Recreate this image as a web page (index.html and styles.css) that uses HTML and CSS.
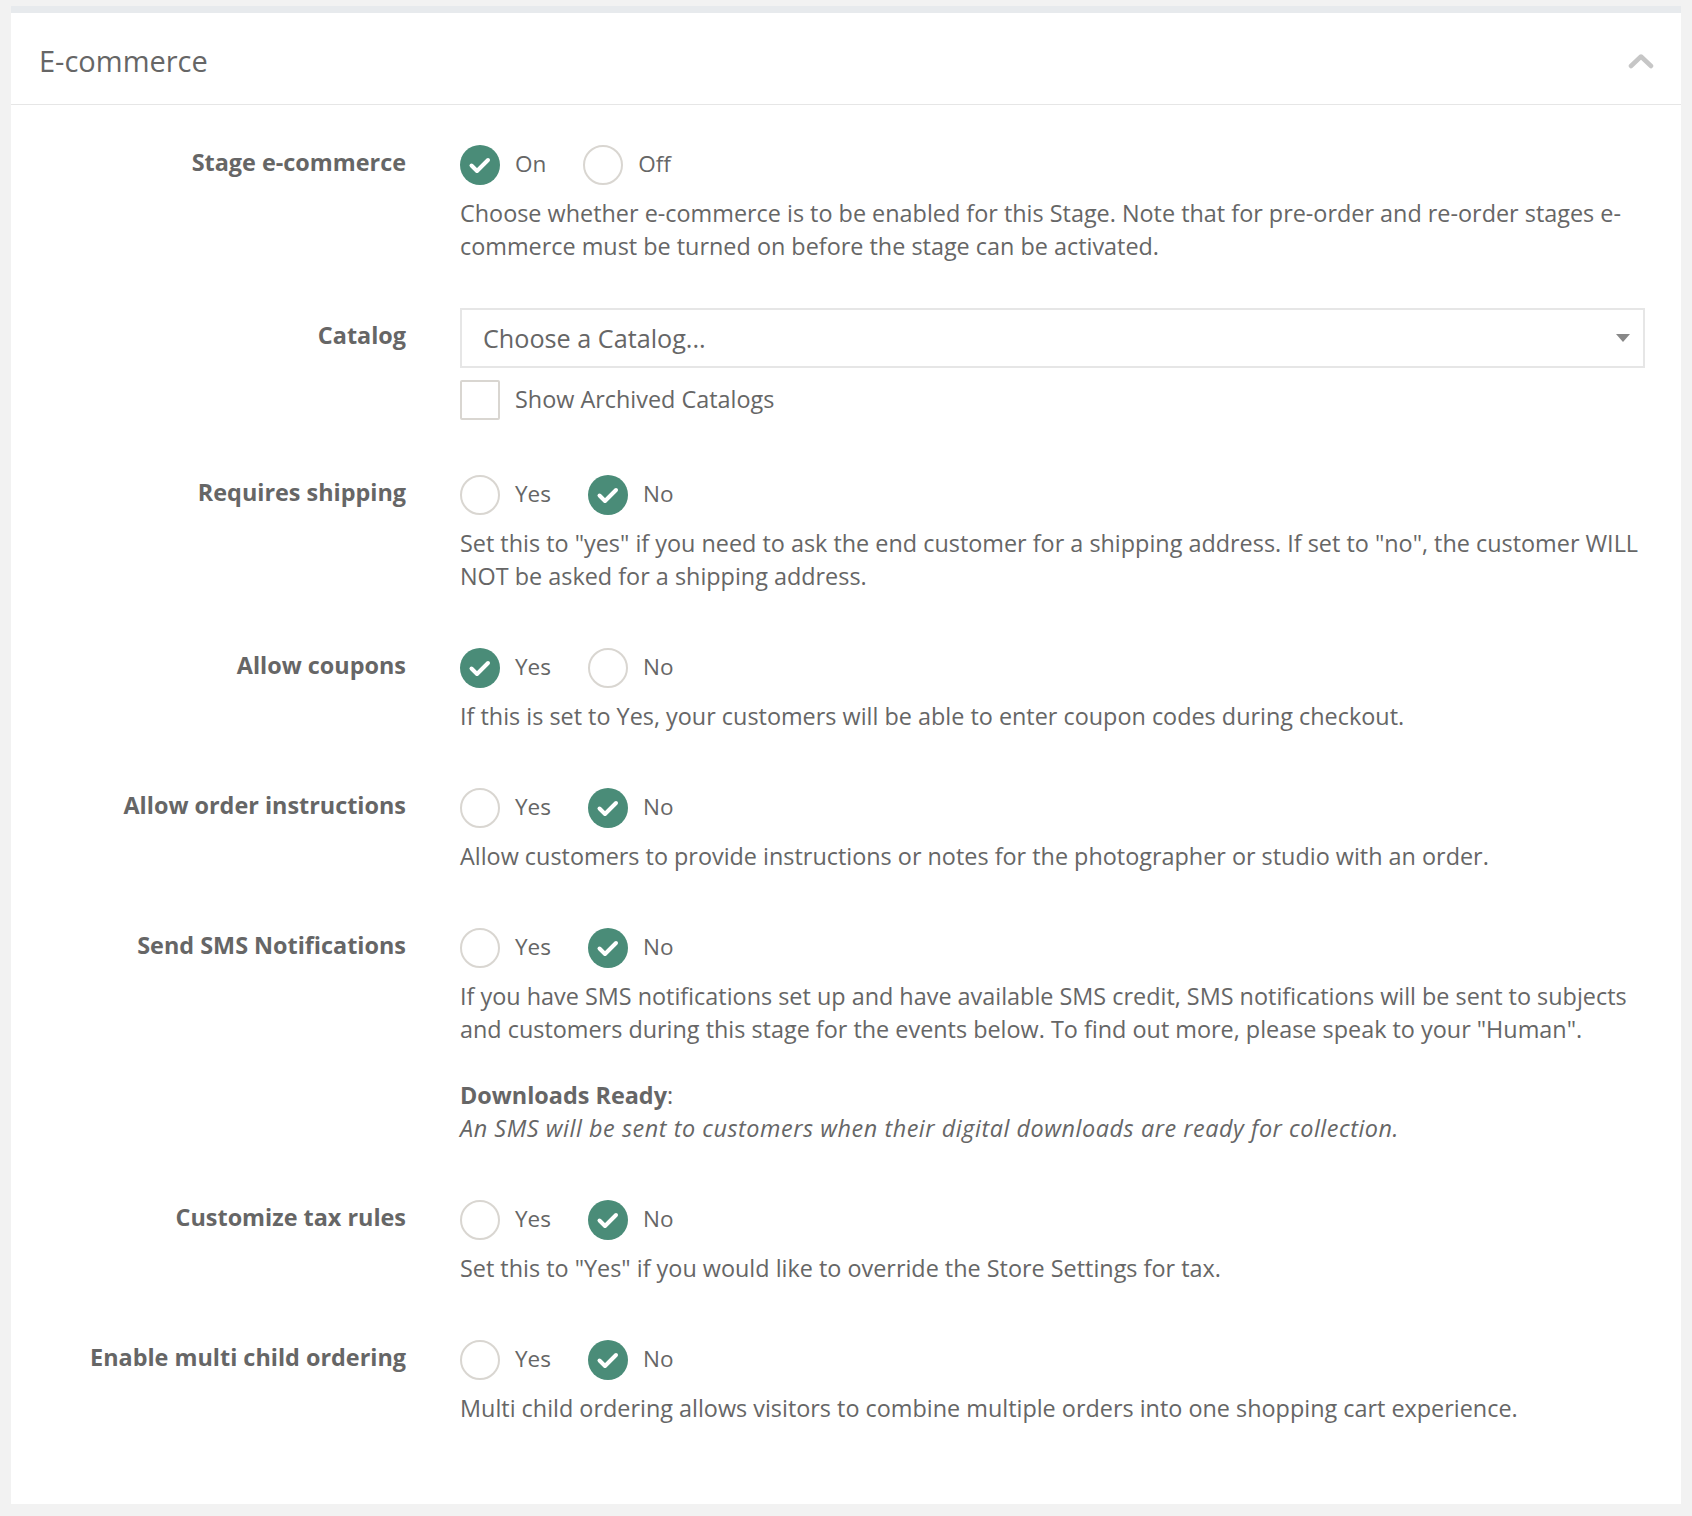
FILE: index.html
```html
<!DOCTYPE html>
<html lang="en">
<head>
    <meta charset="UTF-8">
    <title>E-commerce</title>
    <link rel="stylesheet" href="styles.css">
</head>
<body>
    <div class="panel">
        <div class="panel-heading">
            <h2>E-commerce</h2>
            <svg class="chevron" width="26" height="16" viewBox="0 0 26 16"><path d="M3 13 L13 3.5 L23 13" fill="none" stroke="#c6c6c6" stroke-width="4.5" stroke-linecap="round" stroke-linejoin="round"/></svg>
        </div>
        <div class="panel-body">

            <div class="form-row">
                <label class="row-label">Stage e-commerce</label>
                <div class="row-field">
                    <div class="radio-group">
                        <span class="option"><span class="radio checked"></span><span class="opt-text">On</span></span>
                        <span class="option"><span class="radio"></span><span class="opt-text">Off</span></span>
                    </div>
                    <p class="help">Choose whether e-commerce is to be enabled for this Stage. Note that for pre-order and re-order stages e-commerce must be turned on before the stage can be activated.</p>
                </div>
            </div>

            <div class="form-row">
                <label class="row-label">Catalog</label>
                <div class="row-field">
                    <div class="select">
                        <span>Choose a Catalog...</span>
                        <span class="caret"></span>
                    </div>
                    <div class="check-line">
                        <span class="checkbox"></span><span class="opt-text">Show Archived Catalogs</span>
                    </div>
                </div>
            </div>

            <div class="form-row">
                <label class="row-label">Requires shipping</label>
                <div class="row-field">
                    <div class="radio-group">
                        <span class="option"><span class="radio"></span><span class="opt-text">Yes</span></span>
                        <span class="option"><span class="radio checked"></span><span class="opt-text">No</span></span>
                    </div>
                    <p class="help">Set this to "yes" if you need to ask the end customer for a shipping address. If set to "no", the customer WILL NOT be asked for a shipping address.</p>
                </div>
            </div>

            <div class="form-row">
                <label class="row-label">Allow coupons</label>
                <div class="row-field">
                    <div class="radio-group">
                        <span class="option"><span class="radio checked"></span><span class="opt-text">Yes</span></span>
                        <span class="option"><span class="radio"></span><span class="opt-text">No</span></span>
                    </div>
                    <p class="help">If this is set to Yes, your customers will be able to enter coupon codes during checkout.</p>
                </div>
            </div>

            <div class="form-row">
                <label class="row-label">Allow order instructions</label>
                <div class="row-field">
                    <div class="radio-group">
                        <span class="option"><span class="radio"></span><span class="opt-text">Yes</span></span>
                        <span class="option"><span class="radio checked"></span><span class="opt-text">No</span></span>
                    </div>
                    <p class="help">Allow customers to provide instructions or notes for the photographer or studio with an order.</p>
                </div>
            </div>

            <div class="form-row">
                <label class="row-label">Send SMS Notifications</label>
                <div class="row-field">
                    <div class="radio-group">
                        <span class="option"><span class="radio"></span><span class="opt-text">Yes</span></span>
                        <span class="option"><span class="radio checked"></span><span class="opt-text">No</span></span>
                    </div>
                    <p class="help">If you have SMS notifications set up and have available SMS credit, SMS notifications will be sent to subjects and customers during this stage for the events below. To find out more, please speak to your "Human".</p>
                    <p class="help event"><strong>Downloads Ready</strong>:<br><em>An SMS will be sent to customers when their digital downloads are ready for collection.</em></p>
                </div>
            </div>

            <div class="form-row">
                <label class="row-label">Customize tax rules</label>
                <div class="row-field">
                    <div class="radio-group">
                        <span class="option"><span class="radio"></span><span class="opt-text">Yes</span></span>
                        <span class="option"><span class="radio checked"></span><span class="opt-text">No</span></span>
                    </div>
                    <p class="help">Set this to "Yes" if you would like to override the Store Settings for tax.</p>
                </div>
            </div>

            <div class="form-row">
                <label class="row-label">Enable multi child ordering</label>
                <div class="row-field">
                    <div class="radio-group">
                        <span class="option"><span class="radio"></span><span class="opt-text">Yes</span></span>
                        <span class="option"><span class="radio checked"></span><span class="opt-text">No</span></span>
                    </div>
                    <p class="help">Multi child ordering allows visitors to combine multiple orders into one shopping cart experience.</p>
                </div>
            </div>

        </div>
    </div>
</body>
</html>
```

FILE: styles.css
```css
:root {
    --green: #4a8c78;
    --text: #666;
    --line: #e6e6e6;
    --ring: #d9d6d1;
}

body {
    background-color: #f2f2f2;
    font-family: "Open Sans", "Liberation Sans", sans-serif;
    color: var(--text);
    margin: 6px 11px 11px;
}

.panel {
    background: #fff;
    border-top: 7px solid #e7eaed;
}

.panel-heading {
    height: 92px;
    border-bottom: 1px solid var(--line);
    display: flex;
    align-items: center;
    justify-content: space-between;
    padding: 4px 28px 0;
    box-sizing: border-box;
}
.panel-heading h2 {
    margin: 0;
    font-size: 29px;
    font-weight: 400;
    color: #666;
}
.chevron {
    margin-right: -1px;
}

.panel-body {
    padding: 30px 36px 34px 0;
}

.form-row {
    display: grid;
    grid-template-columns: 395px 1fr;
    column-gap: 54px;
    margin-bottom: 45px;
}
.row-label {
    text-align: right;
    font-weight: 700;
    font-size: 23.4px;
    line-height: 33px;
    padding-top: 11px;
}

.radio-group {
    display: flex;
    padding-top: 10px;
    margin-bottom: 12px;
    font-size: 22.5px;
}
.option {
    display: inline-flex;
    align-items: center;
    gap: 15px;
    margin-right: 37px;
    height: 40px;
}
.opt-text {
    margin-bottom: 3px;
}
.radio {
    width: 40px;
    height: 40px;
    box-sizing: border-box;
    border: 2px solid var(--ring);
    border-radius: 50%;
}
.radio.checked {
    border: none;
    background: var(--green) url("data:image/svg+xml,%3Csvg xmlns='http://www.w3.org/2000/svg' width='40' height='40'%3E%3Cpath d='M11.5 20.5 L17 26 L28 15' fill='none' stroke='white' stroke-width='4' stroke-linecap='round' stroke-linejoin='round'/%3E%3C/svg%3E") no-repeat center;
}

.help {
    margin: 0;
    font-size: 23.4px;
    line-height: 33px;
}
.help.event {
    margin-top: 33px;
}
.help strong {
    font-weight: 700;
}
.help em {
    letter-spacing: 0.55px;
}

.select {
    height: 60px;
    box-sizing: border-box;
    border: 2px solid var(--line);
    display: flex;
    align-items: center;
    justify-content: space-between;
    padding: 0 13px 0 21px;
    font-size: 25.2px;
}
.caret {
    width: 0;
    height: 0;
    border-left: 7px solid transparent;
    border-right: 7px solid transparent;
    border-top: 8px solid #888;
}

.check-line {
    display: flex;
    align-items: center;
    gap: 15px;
    margin-top: 12px;
    font-size: 23.4px;
}
.checkbox {
    width: 40px;
    height: 40px;
    box-sizing: border-box;
    border: 2px solid var(--ring);
    border-radius: 2px;
}
```
